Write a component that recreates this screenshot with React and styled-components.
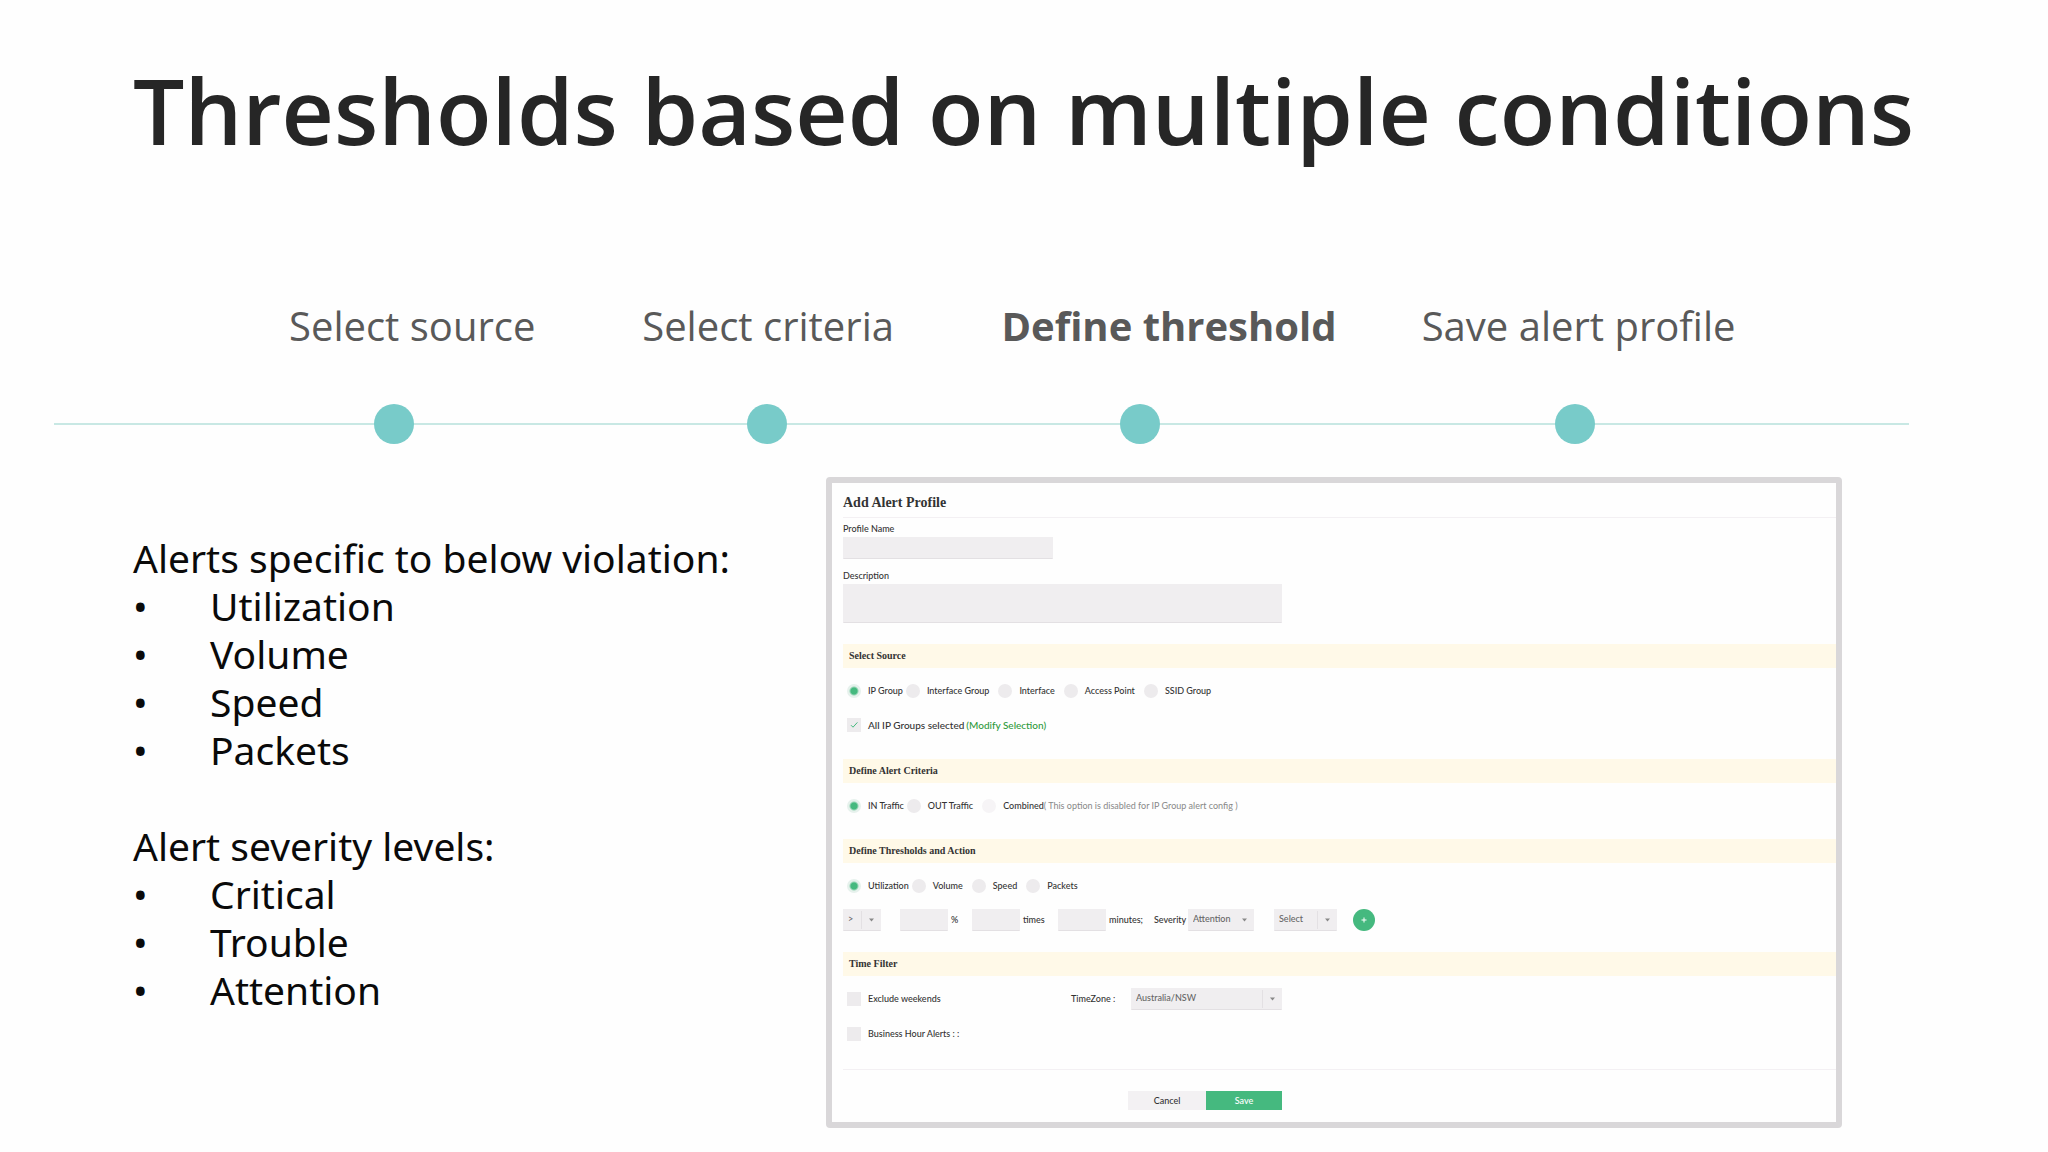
import React from "react";
import styled, { createGlobalStyle, css } from "styled-components";

const slideFont = '"Open Sans", "Noto Sans", sans-serif';
const notesFont = '"Noto Sans", "Open Sans", sans-serif';
const formFont = 'Lato, "Open Sans", sans-serif';
const slabFont = '"Liberation Serif", "DejaVu Serif", serif';

const color = {
  teal: "#78cbc9",
  line: "#c8e8e4",
  green: "#45b97f",
  field: "#f0eef0",
  edge: "#e3e0e3",
  bar: "#fff9e8",
  frame: "#d9d7d9",
  ink: "#333333",
};

const GlobalStyle = createGlobalStyle`
  *, *::before, *::after { box-sizing: border-box; }
  body { margin: 0; background: #fefefe; }
`;

const Slide = styled.main`
  min-height: 100vh;
  padding-top: 64px;
  font-family: ${slideFont};
`;

const Title = styled.h1`
  margin: 0;
  padding-left: 133px;
  font-size: 91px;
  line-height: 92px;
  font-weight: 600;
  white-space: nowrap;
  color: #262626;
`;

const StepLabels = styled.ol`
  display: grid;
  grid-template-columns: 353fr 359fr 420fr 487fr;
  margin: 146px 139px 0 289px;
  padding: 0;
  list-style: none;
`;

const StepLabel = styled.li`
  font-size: 40px;
  line-height: 48px;
  font-weight: ${(p) => (p.$current ? 700 : 400)};
  white-space: nowrap;
  color: #595959;
`;

const Track = styled.div`
  display: grid;
  grid-template-columns: 373fr 373fr 435fr 354fr;
  align-items: center;
  margin: 54px 139px 0 54px;
  padding-left: 320px;
  background: linear-gradient(${color.line}, ${color.line}) center / 100% 2px no-repeat;
`;

const Dot = styled.span`
  width: 40px;
  height: 40px;
  border-radius: 50%;
  background: ${color.teal};
`;

const Content = styled.div`
  display: grid;
  grid-template-columns: 693fr 1016fr;
  align-items: start;
  margin-top: 33px;
  padding: 0 206px 0 133px;
`;

const Notes = styled.section`
  padding-top: 57px;
  font-family: ${notesFont};
  font-size: 39px;
  line-height: 48px;
  white-space: nowrap;
  color: #0a0a0a;
`;

const NoteHeading = styled.p`
  margin: 0;
`;

const NoteList = styled.ul`
  margin: 0 0 48px;
  padding: 0;
  list-style: none;
`;

const NoteItem = styled.li`
  display: flex;

  &::before {
    content: "•";
    width: 77px;
  }
`;

const Panel = styled.form`
  display: flex;
  flex-direction: column;
  padding: 0 0 12px 11px;
  border: 6px solid ${color.frame};
  border-radius: 4px;
  background: #fefefe;
  font-family: ${formFont};
  font-size: 9px;
  line-height: 12px;
  font-weight: 500;
  color: ${color.ink};
`;

const PanelHeader = styled.h2`
  margin: 0 0 5px;
  padding: 12px 0 6px;
  border-bottom: 1px solid #f3f0f3;
  font-family: ${slabFont};
  font-size: 14px;
  line-height: 16px;
  font-weight: 700;
`;

const Field = styled.label`
  display: flex;
  flex-direction: column;
  align-items: flex-start;
  gap: 2px;
  margin-bottom: ${(p) => p.$after}px;
`;

const fieldBox = css`
  border: 1px solid transparent;
  border-bottom-color: ${color.edge};
  border-radius: 0;
  background: ${color.field};
  font: inherit;
  color: #666666;
`;

const TextInput = styled.input`
  ${fieldBox}
  width: ${(p) => p.$width}px;
  height: 22px;
  padding: 0 5px;
`;

const TextArea = styled.textarea`
  ${fieldBox}
  display: block;
  width: 439px;
  height: 39px;
  padding: 4px 5px;
  resize: none;
`;

const SectionBar = styled.h3`
  margin: 0;
  padding: 6px;
  background: ${color.bar};
  font-family: ${slabFont};
  font-size: 10px;
  line-height: 12px;
  font-weight: 700;
`;

const Row = styled.div`
  display: flex;
  align-items: center;
  min-height: 14px;
  padding-left: 4px;
  margin: ${(p) => p.$before}px 0 ${(p) => p.$after || 0}px;
`;

const Choice = styled.label`
  display: flex;
  align-items: center;
  gap: 7px;
  height: 14px;
  margin-right: 9px;
  font-size: ${(p) => (p.$large ? 10 : 9)}px;
  white-space: nowrap;

  &:has(input[type="radio"]:checked) {
    margin-right: 3px;
  }
`;

const Radio = styled.input`
  appearance: none;
  width: 14px;
  height: 14px;
  margin: 0;
  border-radius: 50%;
  background: #edebed;

  &:checked {
    background: radial-gradient(circle, ${color.green} 0 3px, #e6f1ec 5px);
  }

  &:disabled {
    background: #f6f4f6;
  }
`;

const Tick = styled.span`
  display: grid;
  width: 14px;
  height: 14px;

  > * {
    grid-area: 1 / 1;
    place-self: center;
  }

  > svg {
    pointer-events: none;
  }
`;

const CheckInput = styled.input`
  appearance: none;
  width: 14px;
  height: 14px;
  margin: 0;
  background: #edebed;
`;

const Link = styled.a`
  margin-left: -7px;
  font-size: 10px;
  color: #2f9a3c;
  text-decoration: none;
`;

const Muted = styled.span`
  margin-left: -7px;
  font-weight: 400;
  color: #888888;
`;

const Controls = styled.div`
  display: flex;
  align-items: center;
  margin: 16px 0 21px;
`;

const Unit = styled.label`
  display: flex;
  align-items: center;
  gap: 3px;
  width: ${(p) => p.$width}px;
  white-space: nowrap;
`;

const SelectBox = styled.span`
  display: grid;
  flex: none;
  grid-template-columns: 1fr 20px;
  align-items: center;
  width: ${(p) => p.$width}px;
  margin-right: ${(p) => p.$after || 0}px;

  > select {
    grid-area: 1 / 1 / 2 / 3;
  }
`;

const Select = styled.select`
  ${fieldBox}
  appearance: none;
  width: 100%;
  height: 22px;
  padding: 0 4px 2px;
`;

const Caret = styled.span`
  display: grid;
  place-items: center;
  grid-area: 1 / 2;
  height: 18px;
  border-left: 1px solid ${(p) => (p.$divided ? color.edge : "transparent")};
  pointer-events: none;
`;

const AddButton = styled.button`
  display: grid;
  place-items: center;
  width: 22px;
  height: 22px;
  padding: 0;
  border: 0;
  border-radius: 50%;
  background: ${color.green};
`;

const TimeRow = styled.div`
  display: flex;
  align-items: center;
  margin: 12px 0 17px;
  padding-left: 4px;

  > label:first-child {
    width: 224px;
    margin: 0;
  }
`;

const ZoneLabel = styled.label`
  width: 60px;
`;

const Footer = styled.footer`
  display: flex;
  padding: 21px 0 0 285px;
  border-top: 1px solid #f3f0f3;
`;

const Button = styled.button`
  width: ${(p) => (p.$primary ? 76 : 78)}px;
  height: 19px;
  padding: 0;
  border: 0;
  background: ${(p) => (p.$primary ? color.green : "#f3f1f3")};
  font: inherit;
  color: ${(p) => (p.$primary ? "#ffffff" : color.ink)};
`;

function RadioGroup({ name, options, after, note }) {
  return (
    <Row $before={16} $after={after} role="radiogroup" aria-label={name}>
      {options.map((option, index) => (
        <Choice key={option}>
          <Radio
            type="radio"
            name={name}
            defaultChecked={index === 0}
            disabled={Boolean(note) && index === options.length - 1}
          />
          {option}
          {note && index === options.length - 1 && <Muted>{note}</Muted>}
        </Choice>
      ))}
    </Row>
  );
}

function Checkbox({ checked, large, children }) {
  return (
    <Choice $large={large}>
      <Tick>
        <CheckInput type="checkbox" defaultChecked={checked} />
        {checked && (
          <svg width="8" height="8" viewBox="0 0 8 8" fill="none" stroke={color.green}>
            <path d="M1 4.2 3 6.2 7.4 1.4" />
          </svg>
        )}
      </Tick>
      {children}
    </Choice>
  );
}

function Dropdown({ id, label, value, width, after, divided = true }) {
  return (
    <SelectBox $width={width} $after={after}>
      <Select id={id} aria-label={label} defaultValue={value}>
        <option>{value}</option>
      </Select>
      <Caret $divided={divided}>
        <svg width="5" height="4" viewBox="0 0 5 4" fill="#888888">
          <path d="M0 0.5h5L2.5 3.5z" />
        </svg>
      </Caret>
    </SelectBox>
  );
}

function NoteGroup({ heading, items }) {
  return (
    <>
      <NoteHeading>{heading}</NoteHeading>
      <NoteList>
        {items.map((item) => (
          <NoteItem key={item}>{item}</NoteItem>
        ))}
      </NoteList>
    </>
  );
}

export default function App() {
  return (
    <Slide>
      <GlobalStyle />
      <Title>Thresholds based on multiple conditions</Title>
      <StepLabels>
        <StepLabel>Select source</StepLabel>
        <StepLabel>Select criteria</StepLabel>
        <StepLabel $current aria-current="step">Define threshold</StepLabel>
        <StepLabel>Save alert profile</StepLabel>
      </StepLabels>
      <Track aria-hidden="true">
        <Dot />
        <Dot />
        <Dot />
        <Dot />
      </Track>
      <Content>
        <Notes>
          <NoteGroup
            heading="Alerts specific to below violation:"
            items={["Utilization", "Volume", "Speed", "Packets"]}
          />
          <NoteGroup
            heading="Alert severity levels:"
            items={["Critical", "Trouble", "Attention"]}
          />
        </Notes>
        <Panel onSubmit={(event) => event.preventDefault()}>
          <PanelHeader>Add Alert Profile</PanelHeader>
          <Field $after={11}>
            Profile Name
            <TextInput type="text" $width={210} />
          </Field>
          <Field $after={21}>
            Description
            <TextArea />
          </Field>

          <SectionBar>Select Source</SectionBar>
          <RadioGroup
            name="source"
            after={20}
            options={["IP Group", "Interface Group", "Interface", "Access Point", "SSID Group"]}
          />
          <Row $before={0} $after={27}>
            <Checkbox checked large>All IP Groups selected</Checkbox>
            <Link href="#modify">(Modify Selection)</Link>
          </Row>

          <SectionBar>Define Alert Criteria</SectionBar>
          <RadioGroup
            name="criteria"
            after={26}
            options={["IN Traffic", "OUT Traffic", "Combined"]}
            note="( This option is disabled for IP Group alert config )"
          />

          <SectionBar>Define Thresholds and Action</SectionBar>
          <RadioGroup
            name="threshold"
            options={["Utilization", "Volume", "Speed", "Packets"]}
          />
          <Controls>
            <Dropdown label="Comparison" value=">" width={38} after={19} />
            <Unit $width={72}>
              <TextInput type="text" $width={48} />%
            </Unit>
            <Unit $width={86}>
              <TextInput type="text" $width={48} />times
            </Unit>
            <Unit $width={96}>
              <TextInput type="text" $width={48} />minutes;
            </Unit>
            <Unit $width={34} htmlFor="severity">Severity</Unit>
            <Dropdown id="severity" value="Attention" width={66} after={20} divided={false} />
            <Dropdown label="Action" value="Select" width={63} after={16} />
            <AddButton type="button" aria-label="Add threshold">
              <svg width="6" height="6" viewBox="0 0 6 6" stroke="#ffffff">
                <path d="M3 0.5v5M0.5 3h5" />
              </svg>
            </AddButton>
          </Controls>

          <SectionBar>Time Filter</SectionBar>
          <TimeRow>
            <Checkbox>Exclude weekends</Checkbox>
            <ZoneLabel htmlFor="zone">TimeZone :</ZoneLabel>
            <Dropdown id="zone" value="Australia/NSW" width={151} />
          </TimeRow>
          <Row $before={0} $after={28}>
            <Checkbox>Business Hour Alerts : :</Checkbox>
          </Row>
          <Footer>
            <Button type="button">Cancel</Button>
            <Button type="submit" $primary>Save</Button>
          </Footer>
        </Panel>
      </Content>
    </Slide>
  );
}
